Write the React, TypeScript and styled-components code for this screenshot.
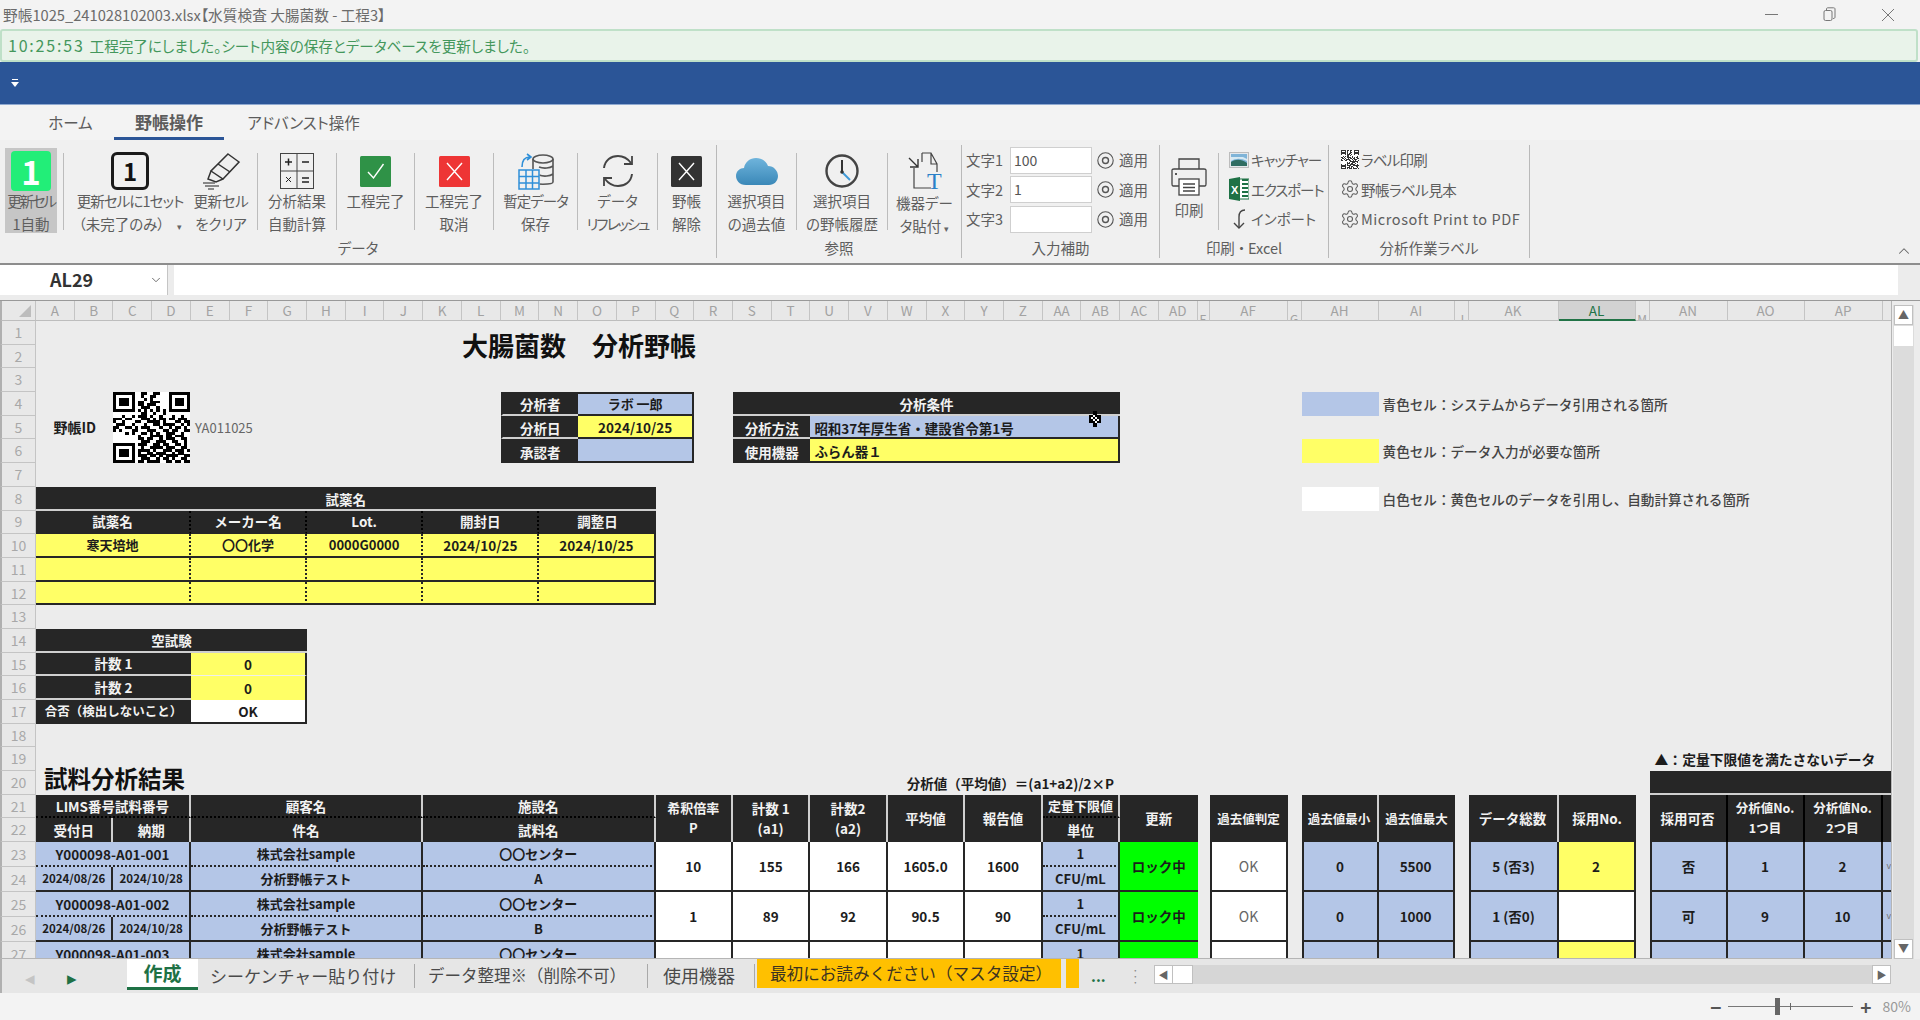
import React from 'react'
import styled, { createGlobalStyle } from 'styled-components'
import { ChevronDown, ChevronUp, Settings } from 'lucide-react'

const UI = `"Noto Sans CJK JP", "Noto Sans", sans-serif`

const Global = createGlobalStyle`
    html, body { margin: 0; padding: 0; background: #f3f3f3; }
    * { box-sizing: border-box; }
    body { font-family: ${UI}; overflow: hidden; line-height: 1.2; }
`

const Window = styled.div`
    width: 1920px;
    height: 1020px;
    display: flex;
    flex-direction: column;
    overflow: hidden;
    background: #f3f3f3;
`

const TitleBar = styled.div`
    height: 29px;
    flex: none;
    display: flex;
    align-items: center;
    padding-left: 3px;
    color: #6b6b6b;
    font-size: 14.7px;
    font-feature-settings: 'palt';
`

const WinButtons = styled.div`
    margin-left: auto;
    display: flex;
    align-items: center;
    gap: 45px;
    padding-right: 25px;
    color: #777;
`

const Message = styled.div`
    height: 33px;
    flex: none;
    margin-right: 2px;
    padding-left: 6px;
    display: flex;
    align-items: center;
    background: #e9f3ea;
    border: 2px solid #bfe0c8;
    border-radius: 3px;
    color: #44975c;
    font-size: 14.6px;
    font-feature-settings: 'palt';
`

const MessageTime = styled.span`
    font-size: 16px;
    letter-spacing: 1.8px;
    margin-right: 5px;
`

const Band = styled.div`
    height: 43px;
    flex: none;
    background: #2b5597;
    display: flex;
    align-items: center;
    padding-left: 11px;
    border-bottom: 1px solid #8fa9d0;
`

const TabRow = styled.div`
    height: 35px;
    flex: none;
    display: flex;
    color: #5c5c5c;
    font-size: 15.5px;
    font-feature-settings: 'palt';
`

const MenuTab = styled.div<{ $gap: number; $w: number; $active?: boolean }>`
    margin-left: ${p => p.$gap}px;
    width: ${p => p.$w}px;
    padding-top: 2px;
    display: flex;
    align-items: center;
    justify-content: center;
    white-space: nowrap;
    font-size: ${p => (p.$active ? 17 : 15.5)}px;
    font-weight: ${p => (p.$active ? 700 : 400)};
    border-bottom: 3px solid ${p => (p.$active ? '#2b5597' : 'transparent')};
`

const Ribbon = styled.div`
    height: 123px;
    flex: none;
    display: flex;
    padding-top: 5px;
    background: #f0f0f0;
    color: #5e5e5e;
    font-size: 14.5px;
    font-feature-settings: 'palt';
`

const Group = styled.div<{ $w: number }>`
    width: ${p => p.$w}px;
    flex: none;
    height: 113px;
    border-right: 1px solid #b9b9b9;
    display: flex;
    flex-direction: column;
`

const GroupBody = styled.div`
    height: 92px;
    display: flex;
    align-items: flex-start;
`

const GroupLabel = styled.div`
    flex: 1;
    display: flex;
    align-items: center;
    justify-content: center;
    font-size: 14.5px;
`

const Divider = styled.div<{ $ml?: number }>`
    width: 1px;
    height: 77px;
    margin: 8px 0 0 ${p => p.$ml ?? 0}px;
    flex: none;
    background: #bcbcbc;
`

const BigButton = styled.div<{ $w: number; $ml?: number; $active?: boolean; $top?: number }>`
    width: ${p => p.$w}px;
    height: 85px;
    margin-left: ${p => p.$ml ?? 0}px;
    margin-top: 3px;
    flex: none;
    display: flex;
    flex-direction: column;
    align-items: center;
    padding-top: ${p => p.$top ?? 5}px;
    background: ${p => (p.$active ? '#c6c6c6' : 'transparent')};
`

const IconBox = styled.div`
    height: 36px;
    flex: none;
    display: flex;
    align-items: center;
    justify-content: center;
`

const BtnText = styled.div<{ $ls?: number; $mt?: number }>`
    line-height: 23px;
    white-space: nowrap;
    text-align: center;
    letter-spacing: ${p => p.$ls ?? 0}px;
    margin-top: ${p => p.$mt ?? 0}px;
`

const Caret = styled.span<{ $ml?: number }>`
    font-size: 9px;
    margin-left: ${p => p.$ml ?? 12}px;
    color: #666;
`

const NumberTile = styled.div<{ $green?: boolean }>`
    width: ${p => (p.$green ? 40 : 38)}px;
    height: ${p => (p.$green ? 40 : 38)}px;
    border-radius: ${p => (p.$green ? 4 : 6)}px;
    background: ${p => (p.$green ? '#22ee78' : 'transparent')};
    border: ${p => (p.$green ? 'none' : '3px solid #1a1a1a')};
    color: ${p => (p.$green ? '#fff' : '#111')};
    display: flex;
    align-items: center;
    justify-content: center;
    font-size: ${p => (p.$green ? 33 : 24)}px;
    font-weight: 700;
    line-height: 1;
`

const InputGrid = styled.div`
    display: grid;
    grid-template-columns: 39px 82px 17px auto;
    grid-auto-rows: 28px;
    row-gap: 1.5px;
    column-gap: 5px;
    align-items: center;
    padding: 1px 0 0 4px;
`

const MiniInput = styled.div`
    height: 27px;
    background: #fff;
    border: 1px solid #cfcfcf;
    padding-left: 3px;
    display: flex;
    align-items: center;
    font-size: 14px;
    color: #555;
`

const LinkList = styled.div<{ $pl: number }>`
    display: flex;
    flex-direction: column;
    padding: 0 0 0 ${p => p.$pl}px;
`

const LinkRow = styled.div<{ $iw: number; $ls?: number }>`
    height: 29.5px;
    display: flex;
    align-items: center;
    white-space: nowrap;
    letter-spacing: ${p => p.$ls ?? 0}px;
    & > :first-child {
        width: ${p => p.$iw}px;
        flex: none;
        display: flex;
        justify-content: center;
    }
`

const Collapse = styled.div`
    margin-left: auto;
    align-self: flex-end;
    padding: 0 7px 3px 0;
    color: #666;
    display: flex;
`

const FormulaRow = styled.div`
    height: 37px;
    flex: none;
    display: flex;
    gap: 6px;
    padding-bottom: 5px;
    background: #ececec;
    border-top: 2px solid #8d8d8d;
`

const NameBox = styled.div`
    width: 168px;
    background: #fff;
    display: flex;
    align-items: center;
    justify-content: space-between;
    padding: 0 4px 0 50px;
    font-size: 18px;
    font-weight: 700;
    color: #333;
    border-right: 1px solid #c5c5c5;
`

const Formula = styled.div`
    flex: 1;
    margin-right: 22px;
    background: #fff;
`

const SheetArea = styled.div`
    height: 659px;
    flex: none;
    display: flex;
    border-top: 1px solid #999;
    background: #ececec;
`

const Sheet = styled.div`
    position: relative;
    width: 1892px;
    flex: none;
    overflow: hidden;
    display: grid;
    grid-template-columns: 36px repeat(30, 38.73px) 12px 78px 14px 77px 76px 14px 90px 77px 14px 78px 77px 78px 40px;
    grid-template-rows: 20px repeat(22, 23.7px) repeat(6, 25px);
    border-right: 1px solid #b5b5b5;
    border-bottom: 1px solid #b5b5b5;
`

const Corner = styled.div`
    grid-column: 1;
    grid-row: 1;
    background: #e8e8e8;
    border-right: 1px solid #c4c4c4;
    border-bottom: 1px solid #bdbdbd;
    border-left: 2px solid #b0b0b0;
    display: flex;
    align-items: flex-end;
    justify-content: flex-end;
    padding: 0 4px 3px 0;
    &::after {
        content: '';
        width: 12px;
        height: 12px;
        background: #bdbdbd;
        clip-path: polygon(100% 0, 100% 100%, 0 100%);
    }
`

const ColHead = styled.div<{ $i: number; $selected?: boolean; $narrow?: boolean }>`
    grid-column: ${p => p.$i + 1};
    grid-row: 1;
    background: ${p => (p.$selected ? '#d2d2d2' : '#e8e8e8')};
    color: ${p => (p.$selected ? '#217346' : '#a2a2a2')};
    border-right: 1px solid #c4c4c4;
    border-bottom: ${p => (p.$selected ? '2px solid #217346' : '1px solid #bdbdbd')};
    font-size: ${p => (p.$narrow ? 12 : 13.5)}px;
    display: flex;
    justify-content: center;
    align-items: center;
    overflow: hidden;
    padding-top: ${p => (p.$narrow ? 17 : 0)}px;
`

const RowHead = styled.div<{ $i: number }>`
    grid-column: 1;
    grid-row: ${p => p.$i + 1};
    background: #e8e8e8;
    color: #a8a8a8;
    border-right: 1px solid #c4c4c4;
    border-bottom: 1px solid #c4c4c4;
    border-left: 2px solid #b0b0b0;
    font-size: 14px;
    display: flex;
    align-items: center;
    justify-content: center;
`

type Tone = 'dark' | 'blue' | 'yellow' | 'white' | 'green' | 'plain'

const toneBg: Record<Tone, string> = {
    dark: '#262626',
    blue: '#b4c6e7',
    yellow: '#ffff66',
    white: '#ffffff',
    green: '#00ff00',
    plain: 'transparent',
}

type CellProps = {
    $c: number
    $r: number
    $cs?: number
    $rs?: number
    $tone?: Tone
    $left?: boolean
    $size?: number
    $weight?: number
    $color?: string
    $bt?: string
    $br?: string
    $bb?: string
    $bl?: string
    $pl?: number
    $ptop?: number
}

const Cell = styled.div<CellProps>`
    grid-column: ${p => p.$c + 1} / span ${p => p.$cs ?? 1};
    grid-row: ${p => p.$r + 1} / span ${p => p.$rs ?? 1};
    min-width: 0;
    display: flex;
    align-items: center;
    justify-content: ${p => (p.$left ? 'flex-start' : 'center')};
    padding-left: ${p => p.$pl ?? 0}px;
    padding-top: ${p => p.$ptop ?? 0}px;
    background: ${p => toneBg[p.$tone ?? 'plain']};
    color: ${p => p.$color ?? (p.$tone === 'dark' ? '#f2f2f2' : '#1c1c1c')};
    font-size: ${p => p.$size ?? (p.$tone === 'dark' ? 13.5 : 13)}px;
    font-weight: ${p => p.$weight ?? 700};
    white-space: nowrap;
    border-top: ${p => p.$bt ?? 'none'};
    border-right: ${p => p.$br ?? 'none'};
    border-bottom: ${p => p.$bb ?? 'none'};
    border-left: ${p => p.$bl ?? 'none'};
`

const Two = styled.span`
    display: block;
    text-align: center;
    line-height: 20px;
`

const PageTitle = styled(Cell)<{ $end?: boolean }>`
    color: #111;
    align-items: ${p => (p.$end ? 'flex-end' : 'center')};
    padding-bottom: ${p => (p.$end ? 3 : 0)}px;
`

const Cursor = styled.svg`
    position: absolute;
    left: 1088px;
    top: 110px;
`

const VScroll = styled.div`
    flex: 1;
    display: flex;
    flex-direction: column;
    padding: 4px 6px 0 1px;
`

const VTrack = styled.div`
    flex: 1;
    background: #dcdcdc;
    display: flex;
    flex-direction: column;
    justify-content: space-between;
    padding: 0 1px;
`

const VButton = styled.div`
    height: 20px;
    background: #fff;
    border: 1px solid #c0c0c0;
    color: #666;
    font-size: 11px;
    display: flex;
    align-items: center;
    justify-content: center;
`

const VThumb = styled.div`
    height: 20px;
    background: #fff;
    margin-top: 1px;
`

const TabBar = styled.div`
    height: 34px;
    flex: none;
    display: flex;
    align-items: center;
    background: #e6e6e6;
    color: #4a4a4a;
`

const SheetNav = styled.div`
    width: 127px;
    flex: none;
    display: flex;
    align-self: stretch;
    align-items: center;
    padding-left: 23px;
    gap: 32px;
    border-left: 2px solid #b0b0b0;
`

const NavArrow = styled.span<{ $on?: boolean }>`
    font-size: 19px;
    line-height: 1;
    color: ${p => (p.$on ? '#1e7145' : '#c4c4c4')};
`

const ActiveTab = styled.div`
    width: 71px;
    height: 31px;
    margin-bottom: 3px;
    background: #fff;
    border-bottom: 3px solid #1e7145;
    color: #1e7145;
    font-size: 19px;
    font-weight: 700;
    display: flex;
    align-items: center;
    justify-content: center;
    flex: none;
`

const SheetTab = styled.div<{ $w: number; $pl: number; $size: number }>`
    width: ${p => p.$w}px;
    flex: none;
    padding-left: ${p => p.$pl}px;
    height: 24px;
    display: flex;
    align-items: center;
    white-space: nowrap;
    font-size: ${p => p.$size}px;
    border-right: 1px solid #a9a9a9;
`

const OrangeTab = styled.div<{ $w: number; $ml: number }>`
    width: ${p => p.$w}px;
    margin-left: ${p => p.$ml}px;
    margin-bottom: 5px;
    height: 29px;
    flex: none;
    background: #ffc000;
    color: #3c3320;
    font-size: 16.6px;
    white-space: nowrap;
    display: flex;
    align-items: center;
    padding-left: 13px;
`

const MoreTabs = styled.div`
    width: 44px;
    margin-left: 9px;
    flex: none;
    color: #1e7145;
    font-size: 15px;
    font-weight: 700;
    padding-left: 3px;
`

const GripDots = styled.div`
    width: 22px;
    flex: none;
    color: #888;
    font-size: 12px;
    line-height: 6px;
    display: flex;
    flex-direction: column;
    align-items: flex-start;
`

const HTrack = styled.div`
    width: 737px;
    height: 19px;
    flex: none;
    margin-bottom: 3px;
    display: flex;
    background: #d6d6d6;
`

const HButton = styled.div`
    width: 19px;
    background: #fff;
    border: 1px solid #c0c0c0;
    color: #666;
    font-size: 10px;
    display: flex;
    align-items: center;
    justify-content: center;
`

const HThumb = styled.div`
    width: 20px;
    background: #fff;
    border: 1px solid #c0c0c0;
    border-left: none;
`

const HSpace = styled.div`
    flex: 1;
`

const StatusBar = styled.div`
    height: 27px;
    flex: none;
    display: flex;
    align-items: center;
    justify-content: flex-end;
    padding-right: 9px;
    background: #f3f3f3;
    color: #555;
`

const ZoomSign = styled.span`
    font-size: 19px;
    font-weight: 700;
    line-height: 1;
    color: #555;
`

const ZoomTrack = styled.div`
    width: 125px;
    height: 1px;
    margin: 0 7px;
    background: #777;
    position: relative;
`

const ZoomThumb = styled.div`
    position: absolute;
    left: 47px;
    top: -8px;
    width: 5px;
    height: 17px;
    background: #666;
`

const ZoomTick = styled.div`
    position: absolute;
    left: 62px;
    top: -3px;
    width: 1px;
    height: 7px;
    background: #666;
`

const ZoomValue = styled.span`
    margin-left: 11px;
    font-size: 14px;
    color: #999;
`

const K = '2px solid #262626'
const L = '2px solid #cfcfcf'
const D = '2px dotted #262626'
const DK = '2px dotted #000'

const qrRows = [
    '1111111001100110001111111',
    '1000001001001100001000001',
    '1011101000101000001011101',
    '1011101011001110001011101',
    '1011101011011100001011101',
    '1000001001110010001000001',
    '1111111010101010101111111',
    '0000000001100100100000000',
    '0001001011101001000100100',
    '1110110001110101101101110',
    '1001000110011110100011011',
    '0111001000100110111100101',
    '1100110101110001001011010',
    '1010001100011100110110011',
    '0000101001101010011100100',
    '0000000010001111011011100',
    '0000000011011001011100110',
    '0000000001110011100110010',
    '1111111011100110110011010',
    '1000001001001111011100110',
    '1011101011110100111011101',
    '1011101010011011100101100',
    '1011101011101101011110011',
    '1000001001110010110100110',
    '1111111011011110011011011',
]

const QrCode = ({ width, height, color = '#000' }: { width: number; height: number; color?: string }) => (
    <svg width={width} height={height} viewBox="0 0 25 25" preserveAspectRatio="none" shapeRendering="crispEdges">
        <rect width="25" height="25" fill="#fff" />
        {qrRows.map((row, y) =>
            row.split('').map((bit, x) => (bit === '1' ? <rect key={`${x}-${y}`} x={x} y={y} width="1.02" height="1.02" fill={color} /> : null))
        )}
    </svg>
)

const EraserIcon = () => (
    <svg width="40" height="38" viewBox="0 0 40 38" fill="none" stroke="#333" strokeWidth="1.5">
        <path d="M27 2 L38 10 L22 27 L10 19 Z" />
        <path d="M17 12 L29 20" />
        <path d="M10 19 L7 27 L15 30 L22 27" />
        <path d="M2 31 H14 M4 34 H18 M7 37 H13" stroke="#666" />
    </svg>
)

const CalcIcon = () => (
    <svg width="34" height="36" viewBox="0 0 34 36" fill="none" stroke="#444">
        <rect x="0.5" y="0.5" width="33" height="35" />
        <path d="M17 0 V36 M0 18 H34" />
        <path d="M5 9 H12 M8.5 5.5 V12.5 M22 9 H29" stroke="#222" strokeWidth="1.5" />
        <path d="M6 24 L11 29 M11 24 L6 29" stroke="#222" />
        <path d="M22 25 H29 M22 29 H29" stroke="#222" strokeWidth="1.5" />
    </svg>
)

const StatusIcon = ({ color, check }: { color: string; check?: boolean }) => (
    <svg width="31" height="31" viewBox="0 0 31 31" fill="none">
        <rect width="31" height="31" rx="1.5" fill={color} />
        {check ? (
            <path d="M8 16 L13.5 22 L23.5 8" stroke="#fff" strokeWidth="1.4" />
        ) : (
            <path d="M8 7 L23 24 M23 7 L8 24" stroke="#fff" strokeWidth="1.4" />
        )}
    </svg>
)

const SaveDataIcon = () => (
    <svg width="36" height="38" viewBox="0 0 36 38" fill="none">
        <ellipse cx="25" cy="7" rx="10" ry="4" stroke="#555" strokeWidth="1.6" />
        <path d="M15 7 V30 C15 33 35 33 35 30 V7 M21 15 C26 17 32 16 35 14 M21 23 C26 25 32 24 35 22" stroke="#555" strokeWidth="1.6" />
        <rect x="0.5" y="17" width="21" height="20" fill="#f0f0f0" />
        <path d="M1 18 H21 V37 H1 Z M8 18 V37 M14.5 18 V37 M1 24.5 H21 M1 31 H21" stroke="#2f8fd8" strokeWidth="1.5" />
        <path d="M4 15 C4 8 7 5 12 5 M9 2 L13 5 L9 8" stroke="#2f8fd8" strokeWidth="1.6" />
    </svg>
)

const RefreshIcon = () => (
    <svg width="34" height="36" viewBox="0 0 34 36" fill="none" stroke="#444" strokeWidth="2">
        <path d="M3 15 C4 7 10 3 17 3 C23 3 27 6 30 10" />
        <path d="M31 3 V11 H23" strokeWidth="1.8" />
        <path d="M31 21 C30 29 24 33 17 33 C11 33 7 30 4 26" />
        <path d="M3 33 V25 H11" strokeWidth="1.8" />
    </svg>
)

const CloudIcon = () => (
    <svg width="42" height="28" viewBox="0 0 42 28">
        <defs>
            <linearGradient id="cloudFill" x1="0" y1="0" x2="0" y2="1">
                <stop offset="0" stopColor="#6fb4dc" />
                <stop offset="1" stopColor="#3a88b8" />
            </linearGradient>
        </defs>
        <path d="M10 28 C3 28 0 23 0 19 C0 14 4 11 8 11 C9 5 14 1 20 1 C26 1 30 4 32 9 C38 9 42 14 42 19 C42 24 38 28 33 28 Z" fill="url(#cloudFill)" />
    </svg>
)

const ClockIcon = () => (
    <svg width="34" height="34" viewBox="0 0 34 34" fill="none">
        <circle cx="17" cy="17" r="15.5" stroke="#444" strokeWidth="2.4" />
        <path d="M17 6 V18" stroke="#333" strokeWidth="2" />
        <path d="M17 18 L25 26" stroke="#3f9ad8" strokeWidth="2" />
        <circle cx="17" cy="18" r="1.8" fill="#333" />
    </svg>
)

const PasteIcon = () => (
    <svg width="36" height="38" viewBox="0 0 36 38" fill="none">
        <path d="M15 1 H24 L30 12 V20 M24 1 V12 H30 M7 16 V36 H24" stroke="#444" strokeWidth="1.2" />
        <path d="M2 6 L11 15 M11 7 V15 H3" stroke="#333" strokeWidth="1.4" />
        <path d="M15 1 V10" stroke="#444" strokeWidth="1.2" />
        <text x="20" y="37" fontFamily="Liberation Serif, serif" fontSize="24" fill="#2a80c8">T</text>
    </svg>
)

const RadioIcon = () => (
    <svg width="17" height="17" viewBox="0 0 17 17" fill="none" stroke="#555">
        <circle cx="8.5" cy="8.5" r="7.7" strokeWidth="1.1" />
        <circle cx="8.5" cy="8.5" r="3" strokeWidth="1.4" />
    </svg>
)

const PrinterIcon = () => (
    <svg width="36" height="38" viewBox="0 0 36 38" fill="none" stroke="#444" strokeWidth="1.3">
        <path d="M8 11 V1 H28 V11" />
        <path d="M8 28 H2 C1 28 1 27 1 26 V12 C1 11 2 11 3 11 H33 C34 11 35 11 35 12 V26 C35 27 35 28 34 28 H28" />
        <rect x="8" y="21" width="20" height="16" fill="#fff" />
        <path d="M12 26 H24 M12 29.5 H24 M12 33 H24" />
        <circle cx="5" cy="16" r="1" fill="#222" stroke="none" />
    </svg>
)

const PictureIcon = () => (
    <svg width="20" height="16" viewBox="0 0 20 16">
        <rect x="0.5" y="0.5" width="19" height="15" fill="#e4e8ec" stroke="#bcbcbc" />
        <rect x="2" y="2" width="16" height="12" fill="#7fb4d8" />
        <path d="M2 10 C7 7 12 7 18 11 V14 H2 Z" fill="#2f6d62" />
        <path d="M2 5 H14 L18 7 V9 C12 6 7 6 2 9 Z" fill="#d7e9f2" />
    </svg>
)

const ExcelIcon = () => (
    <svg width="20" height="24" viewBox="0 0 20 24">
        <rect x="8" y="2" width="12" height="20" fill="#fff" stroke="#1e7145" />
        <path d="M13 3 H19 M13 7 H19 M13 11 H19 M13 15 H19 M13 19 H19" stroke="#1e7145" strokeWidth="2" />
        <path d="M0 2 L11 0 V24 L0 22 Z" fill="#1e7145" />
        <text x="2" y="16.5" fontFamily="Liberation Sans, sans-serif" fontWeight="700" fontSize="11" fill="#fff">X</text>
    </svg>
)

const ImportIcon = () => (
    <svg width="16" height="22" viewBox="0 0 16 22" fill="none" stroke="#444" strokeWidth="1.4">
        <path d="M14 2 C9 2 8 5 8 9 V20" />
        <path d="M3 15 L8 20 L13 15" />
    </svg>
)

const sheetColumns: string[] = 'ABCDEFGHIJKLMNOPQRSTUVWXYZ'.split('').concat(['AA', 'AB', 'AC', 'AD', 'E', 'AF', 'G', 'AH', 'AI', 'J', 'AK', 'AL', 'M', 'AN', 'AO', 'AP', 'AQ'])
const narrowIdx = [31, 33, 36, 39]

type ResultRow = {
    no: string
    recv: string
    due: string
    sample: string
    p: string
    a1: string
    a2: string
    avg: string
    rep: string
    past: string
    min: string
    max: string
    total: string
    adopt: string
    adoptTone: Tone
    judge: string
    n1: string
    n2: string
}

const results: ResultRow[] = [
    { no: 'Y000098-A01-001', recv: '2024/08/26', due: '2024/10/28', sample: 'A', p: '10', a1: '155', a2: '166', avg: '1605.0', rep: '1600', past: 'OK', min: '0', max: '5500', total: '5 (否3)', adopt: '2', adoptTone: 'yellow', judge: '否', n1: '1', n2: '2' },
    { no: 'Y000098-A01-002', recv: '2024/08/26', due: '2024/10/28', sample: 'B', p: '1', a1: '89', a2: '92', avg: '90.5', rep: '90', past: 'OK', min: '0', max: '1000', total: '1 (否0)', adopt: '', adoptTone: 'white', judge: '可', n1: '9', n2: '10' },
    { no: 'Y000098-A01-003', recv: '', due: '', sample: '', p: '', a1: '', a2: '', avg: '', rep: '', past: '', min: '', max: '', total: '', adopt: '', adoptTone: 'yellow', judge: '', n1: '', n2: '' },
]

// 数値列の見出し（開始列, 列数, 見出し）
const headNumbers: [number, number, React.ReactNode, number?][] = [
    [17, 2, <Two>希釈倍率<br />P</Two>, 13],
    [19, 2, <Two>計数 1<br />(a1)</Two>],
    [21, 2, <Two>計数2<br />(a2)</Two>],
    [23, 2, '平均値'],
    [25, 2, '報告値'],
]

const ResultBlock = ({ row, r }: { row: ResultRow; r: number }) => {
    const whiteCell = { $tone: 'white' as Tone, $rs: 2, $br: K, $bb: K, $size: 13.5 }
    const blueCell = { $tone: 'blue' as Tone, $rs: 2, $br: K, $bb: K, $size: 13.5 }
    return (
        <>
            <Cell $c={1} $cs={4} $r={r} $tone="blue" $bb={D} $br={K} $size={13.5}>{row.no}</Cell>
            <Cell $c={1} $cs={2} $r={r + 1} $tone="blue" $br={K} $bb={K} $size={11.5}>{row.recv}</Cell>
            <Cell $c={3} $cs={2} $r={r + 1} $tone="blue" $br={K} $bb={K} $size={11.5}>{row.due}</Cell>
            <Cell $c={5} $cs={6} $r={r} $tone="blue" $bb={D} $br={K}>株式会社sample</Cell>
            <Cell $c={5} $cs={6} $r={r + 1} $tone="blue" $bb={K} $br={K}>{row.recv ? '分析野帳テスト' : ''}</Cell>
            <Cell $c={11} $cs={6} $r={r} $tone="blue" $bb={D} $br={K}>〇〇センター</Cell>
            <Cell $c={11} $cs={6} $r={r + 1} $tone="blue" $bb={K} $br={K}>{row.sample}</Cell>
            <Cell $c={17} $cs={2} $r={r} {...whiteCell}>{row.p}</Cell>
            <Cell $c={19} $cs={2} $r={r} {...whiteCell}>{row.a1}</Cell>
            <Cell $c={21} $cs={2} $r={r} {...whiteCell}>{row.a2}</Cell>
            <Cell $c={23} $cs={2} $r={r} {...whiteCell}>{row.avg}</Cell>
            <Cell $c={25} $cs={2} $r={r} {...whiteCell}>{row.rep}</Cell>
            <Cell $c={27} $cs={2} $r={r} $tone="blue" $bb={D} $br={K}>1</Cell>
            <Cell $c={27} $cs={2} $r={r + 1} $tone="blue" $bb={K} $br={K}>CFU/mL</Cell>
            <Cell $c={29} $cs={2} $r={r} $rs={2} $tone="green" $bb={K} $size={13.5}>{row.recv ? 'ロック中' : ''}</Cell>
            <Cell $c={32} $r={r} {...whiteCell} $bl={K} $weight={400} $color="#666" $size={14}>{row.past}</Cell>
            <Cell $c={34} $r={r} {...blueCell} $bl={K}>{row.min}</Cell>
            <Cell $c={35} $r={r} {...blueCell}>{row.max}</Cell>
            <Cell $c={37} $r={r} {...blueCell} $bl={K}>{row.total}</Cell>
            <Cell $c={38} $r={r} {...whiteCell} $tone={row.adoptTone}>{row.adopt}</Cell>
            <Cell $c={40} $r={r} {...blueCell} $bl={K}>{row.judge}</Cell>
            <Cell $c={41} $r={r} {...blueCell}>{row.n1}</Cell>
            <Cell $c={42} $r={r} {...blueCell}>{row.n2}</Cell>
            <Cell $c={43} $r={r} $rs={2} $tone="blue" $bb={K} $left $pl={4} $size={9} $weight={400} $color="#777">{row.recv ? 'v' : ''}</Cell>
        </>
    )
}

const App = () => {
    return (
        <Window>
            <Global />
            <TitleBar>
                野帳1025_241028102003.xlsx【水質検査 大腸菌数 - 工程3】
                <WinButtons>
                    <svg width="13" height="13" viewBox="0 0 13 13" stroke="currentColor"><path d="M0 6.5 H13" /></svg>
                    <svg width="13" height="15" viewBox="0 0 13 15" fill="none" stroke="currentColor"><rect x="1" y="3.5" width="8" height="10" rx="1.5" /><path d="M3.5 3.5 V2 C3.5 1 4 0.8 5 0.8 H10.5 C11.5 0.8 12 1.2 12 2 V10 C12 11 11.5 11.5 10 11.5" /></svg>
                    <svg width="14" height="14" viewBox="0 0 14 14" stroke="currentColor"><path d="M1 1 L13 13 M13 1 L1 13" /></svg>
                </WinButtons>
            </TitleBar>
            <Message><MessageTime>10:25:53</MessageTime>工程完了にしました。シート内容の保存とデータベースを更新しました。</Message>
            <Band>
                <svg width="8" height="9" viewBox="0 0 8 9" fill="#fff"><rect width="6" height="1" x="1" y="0" /><path d="M0 3 H8 L4 8 Z" /></svg>
            </Band>
            <TabRow>
                <MenuTab $gap={50} $w={41}>ホーム</MenuTab>
                <MenuTab $gap={23} $w={110} $active>野帳操作</MenuTab>
                <MenuTab $gap={22} $w={115}>アドバンスト操作</MenuTab>
            </TabRow>
            <Ribbon>
                <Group $w={717}>
                    <GroupBody>
                        <BigButton $w={52} $ml={5} $active>
                            <IconBox><NumberTile $green>1</NumberTile></IconBox>
                            <BtnText $ls={-2.2}>更新セル</BtnText>
                            <BtnText>1自動</BtnText>
                        </BigButton>
                        <Divider $ml={6} />
                        <BigButton $w={132}>
                            <IconBox><NumberTile>1</NumberTile></IconBox>
                            <BtnText $ls={-0.9}>更新セルに1セット</BtnText>
                            <BtnText>（未完了のみ）<Caret>▾</Caret></BtnText>
                        </BigButton>
                        <BigButton $w={50}>
                            <IconBox><EraserIcon /></IconBox>
                            <BtnText $ls={-0.3}>更新セル</BtnText>
                            <BtnText>をクリア</BtnText>
                        </BigButton>
                        <Divider $ml={11} />
                        <BigButton $w={78}>
                            <IconBox><CalcIcon /></IconBox>
                            <BtnText>分析結果</BtnText>
                            <BtnText>自動計算</BtnText>
                        </BigButton>
                        <Divider />
                        <BigButton $w={77}>
                            <IconBox><StatusIcon color="#2f9247" check /></IconBox>
                            <BtnText>工程完了</BtnText>
                        </BigButton>
                        <Divider />
                        <BigButton $w={78}>
                            <IconBox><StatusIcon color="#ee3535" /></IconBox>
                            <BtnText>工程完了</BtnText>
                            <BtnText>取消</BtnText>
                        </BigButton>
                        <Divider />
                        <BigButton $w={83}>
                            <IconBox><SaveDataIcon /></IconBox>
                            <BtnText $ls={-1}>暫定データ</BtnText>
                            <BtnText>保存</BtnText>
                        </BigButton>
                        <Divider />
                        <BigButton $w={79}>
                            <IconBox><RefreshIcon /></IconBox>
                            <BtnText>データ</BtnText>
                            <BtnText $ls={-2}>リフレッシュ</BtnText>
                        </BigButton>
                        <Divider />
                        <BigButton $w={57}>
                            <IconBox><StatusIcon color="#333333" /></IconBox>
                            <BtnText>野帳</BtnText>
                            <BtnText>解除</BtnText>
                        </BigButton>
                    </GroupBody>
                    <GroupLabel>データ</GroupLabel>
                </Group>
                <Group $w={245}>
                    <GroupBody>
                        <BigButton $w={79}>
                            <IconBox><CloudIcon /></IconBox>
                            <BtnText>選択項目</BtnText>
                            <BtnText>の過去値</BtnText>
                        </BigButton>
                        <Divider />
                        <BigButton $w={90}>
                            <IconBox><ClockIcon /></IconBox>
                            <BtnText>選択項目</BtnText>
                            <BtnText>の野帳履歴</BtnText>
                        </BigButton>
                        <Divider />
                        <BigButton $w={73}>
                            <IconBox><PasteIcon /></IconBox>
                            <BtnText $mt={2}>機器デー</BtnText>
                            <BtnText>タ貼付<Caret $ml={3}>▾</Caret></BtnText>
                        </BigButton>
                    </GroupBody>
                    <GroupLabel>参照</GroupLabel>
                </Group>
                <Group $w={198}>
                    <GroupBody>
                        <InputGrid>
                            <span>文字1</span>
                            <MiniInput>100</MiniInput>
                            <RadioIcon />
                            <span>適用</span>
                            <span>文字2</span>
                            <MiniInput>1</MiniInput>
                            <RadioIcon />
                            <span>適用</span>
                            <span>文字3</span>
                            <MiniInput />
                            <RadioIcon />
                            <span>適用</span>
                        </InputGrid>
                    </GroupBody>
                    <GroupLabel>入力補助</GroupLabel>
                </Group>
                <Group $w={169}>
                    <GroupBody>
                        <BigButton $w={58} $top={11}>
                            <IconBox><PrinterIcon /></IconBox>
                            <BtnText $mt={3}>印刷</BtnText>
                        </BigButton>
                        <Divider />
                        <LinkList $pl={8}>
                            <LinkRow $iw={24} $ls={-1}><span><PictureIcon /></span>キャッチャー</LinkRow>
                            <LinkRow $iw={24} $ls={-1.1}><span><ExcelIcon /></span>エクスポート</LinkRow>
                            <LinkRow $iw={24}><span><ImportIcon /></span>インポート</LinkRow>
                        </LinkList>
                    </GroupBody>
                    <GroupLabel>印刷&#8201;・&#8201;Excel</GroupLabel>
                </Group>
                <Group $w={201}>
                    <GroupBody>
                        <LinkList $pl={9}>
                            <LinkRow $iw={23} $ls={-0.8}><span><QrCode width={18} height={19} color="#333" /></span>ラベル印刷</LinkRow>
                            <LinkRow $iw={23} $ls={-0.5}><span><Settings size={20} strokeWidth={1.3} /></span>野帳ラベル見本</LinkRow>
                            <LinkRow $iw={23} $ls={0.55}><span><Settings size={20} strokeWidth={1.3} /></span>Microsoft Print to PDF</LinkRow>
                        </LinkList>
                    </GroupBody>
                    <GroupLabel>分析作業ラベル</GroupLabel>
                </Group>
                <Collapse><ChevronUp size={18} strokeWidth={1.4} /></Collapse>
            </Ribbon>
            <FormulaRow>
                <NameBox>AL29<ChevronDown size={14} strokeWidth={1.6} color="#666" /></NameBox>
                <Formula />
            </FormulaRow>
            <SheetArea>
                <Sheet>
                    <Corner />
                    {sheetColumns.map((name, i) => (
                        <ColHead key={i} $i={i + 1} $selected={name === 'AL'} $narrow={narrowIdx.includes(i + 1)}>{name === 'AQ' ? '' : name}</ColHead>
                    ))}
                    {Array.from({ length: 27 }, (_, i) => (
                        <RowHead key={i} $i={i + 1}>{i + 1}</RowHead>
                    ))}

                    <PageTitle $c={12} $cs={8} $r={1} $rs={2} $left $size={26}>大腸菌数　分析野帳</PageTitle>

                    <Cell $c={1} $cs={2} $r={5} $size={14}>野帳ID</Cell>
                    <Cell $c={3} $cs={2} $r={4} $rs={3}><QrCode width={78} height={71} /></Cell>
                    <Cell $c={5} $cs={2} $r={5} $left $pl={4} $size={13} $weight={400} $color="#666">YA011025</Cell>

                    <Cell $c={13} $cs={2} $r={4} $tone="dark" $bb={L} $bl={K} $ptop={3}>分析者</Cell>
                    <Cell $c={15} $cs={3} $r={4} $tone="blue" $bb={K} $br={K} $bt={K}>ラボ 一郎</Cell>
                    <Cell $c={13} $cs={2} $r={5} $tone="dark" $bb={L} $bl={K} $ptop={3}>分析日</Cell>
                    <Cell $c={15} $cs={3} $r={5} $tone="yellow" $bb={K} $br={K} $size={13.5}>2024/10/25</Cell>
                    <Cell $c={13} $cs={2} $r={6} $tone="dark" $bb={K} $bl={K} $ptop={3}>承認者</Cell>
                    <Cell $c={15} $cs={3} $r={6} $tone="blue" $bb={K} $br={K} />

                    <Cell $c={19} $cs={10} $r={4} $tone="dark" $bb={L} $ptop={3}>分析条件</Cell>
                    <Cell $c={19} $cs={2} $r={5} $tone="dark" $bb={L} $ptop={3}>分析方法</Cell>
                    <Cell $c={21} $cs={8} $r={5} $tone="blue" $bb={K} $br={K} $left $pl={4} $ptop={2} $size={13.5}>昭和37年厚生省・建設省令第1号</Cell>
                    <Cell $c={19} $cs={2} $r={6} $tone="dark" $bb={K} $ptop={3}>使用機器</Cell>
                    <Cell $c={21} $cs={8} $r={6} $tone="yellow" $bb={K} $br={K} $left $pl={4} $ptop={2} $size={13.5}>ふらん器１</Cell>

                    <Cell $c={34} $r={4} $tone="blue" />
                    <Cell $c={35} $cs={8} $r={4} $left $pl={4} $size={13.6} $weight={500} $color="#444">青色セル：システムからデータ引用される箇所</Cell>
                    <Cell $c={34} $r={6} $tone="yellow" />
                    <Cell $c={35} $cs={8} $r={6} $left $pl={4} $size={13.6} $weight={500} $color="#444">黄色セル：データ入力が必要な箇所</Cell>
                    <Cell $c={34} $r={8} $tone="white" />
                    <Cell $c={35} $cs={8} $r={8} $left $pl={4} $size={13.6} $weight={500} $color="#444">白色セル：黄色セルのデータを引用し、自動計算される箇所</Cell>

                    <Cell $c={1} $cs={16} $r={8} $tone="dark" $bb={L} $ptop={3}>試薬名</Cell>
                    <Cell $c={1} $cs={4} $r={9} $tone="dark" $br={DK} $bb={K}>試薬名</Cell>
                    <Cell $c={5} $cs={3} $r={9} $tone="dark" $br={DK} $bb={K}>メーカー名</Cell>
                    <Cell $c={8} $cs={3} $r={9} $tone="dark" $br={DK} $bb={K}>Lot.</Cell>
                    <Cell $c={11} $cs={3} $r={9} $tone="dark" $br={DK} $bb={K}>開封日</Cell>
                    <Cell $c={14} $cs={3} $r={9} $tone="dark" $bb={K}>調整日</Cell>
                    {[
                        ['寒天培地', '〇〇化学', '0000G0000', '2024/10/25', '2024/10/25'],
                        ['', '', '', '', ''],
                        ['', '', '', '', ''],
                    ].map((vals, n) => (
                        <React.Fragment key={n}>
                            <Cell $c={1} $cs={4} $r={10 + n} $tone="yellow" $br={D} $bb={K}>{vals[0]}</Cell>
                            <Cell $c={5} $cs={3} $r={10 + n} $tone="yellow" $br={D} $bb={K}>{vals[1]}</Cell>
                            <Cell $c={8} $cs={3} $r={10 + n} $tone="yellow" $br={D} $bb={K}>{vals[2]}</Cell>
                            <Cell $c={11} $cs={3} $r={10 + n} $tone="yellow" $br={D} $bb={K} $size={13.5}>{vals[3]}</Cell>
                            <Cell $c={14} $cs={3} $r={10 + n} $tone="yellow" $br={K} $bb={K} $size={13.5}>{vals[4]}</Cell>
                        </React.Fragment>
                    ))}

                    <Cell $c={1} $cs={7} $r={14} $tone="dark" $bb={L}>空試験</Cell>
                    <Cell $c={1} $cs={4} $r={15} $tone="dark" $bb={L}>計数 1</Cell>
                    <Cell $c={5} $cs={3} $r={15} $tone="yellow" $bb="1px solid #eee" $br={K} $size={13.5}>0</Cell>
                    <Cell $c={1} $cs={4} $r={16} $tone="dark" $bb={L}>計数 2</Cell>
                    <Cell $c={5} $cs={3} $r={16} $tone="yellow" $br={K} $size={13.5}>0</Cell>
                    <Cell $c={1} $cs={4} $r={17} $tone="dark" $bb={K} $size={12.5}>合否（検出しないこと）</Cell>
                    <Cell $c={5} $cs={3} $r={17} $tone="white" $bb={K} $br={K} $size={13.5}>OK</Cell>

                    <PageTitle $c={1} $cs={8} $r={19} $rs={2} $left $end $pl={8} $size={23.5}>試料分析結果</PageTitle>
                    <Cell $c={23} $cs={8} $r={20} $size={13.5} $left $pl={19}>分析値（平均値）＝(a1+a2)/2×P</Cell>
                    <Cell $c={40} $cs={4} $r={19} $left $pl={5} $size={13.8}>▲：定量下限値を満たさないデータ</Cell>
                    <Cell $c={40} $cs={4} $r={20} $tone="dark" $bb={L} />

                    <Cell $c={1} $cs={4} $r={21} $tone="dark" $bb={DK} $br={L}>LIMS番号試料番号</Cell>
                    <Cell $c={1} $cs={2} $r={22} $tone="dark" $br={L}>受付日</Cell>
                    <Cell $c={3} $cs={2} $r={22} $tone="dark" $br={L}>納期</Cell>
                    <Cell $c={5} $cs={6} $r={21} $tone="dark" $bb={DK} $br={L}>顧客名</Cell>
                    <Cell $c={5} $cs={6} $r={22} $tone="dark" $br={L}>件名</Cell>
                    <Cell $c={11} $cs={6} $r={21} $tone="dark" $bb={DK} $br={L}>施設名</Cell>
                    <Cell $c={11} $cs={6} $r={22} $tone="dark" $br={L}>試料名</Cell>
                    {headNumbers.map(([c, cs, label, size], n) => (
                        <Cell key={n} $c={c} $cs={cs} $r={21} $rs={2} $tone="dark" $br={L} $size={size}>{label}</Cell>
                    ))}
                    <Cell $c={27} $cs={2} $r={21} $tone="dark" $bb={DK} $br={L} $size={13}>定量下限値</Cell>
                    <Cell $c={27} $cs={2} $r={22} $tone="dark" $br={L}>単位</Cell>
                    <Cell $c={29} $cs={2} $r={21} $rs={2} $tone="dark">更新</Cell>
                    <Cell $c={32} $r={21} $rs={2} $tone="dark" $size={12.5}>過去値判定</Cell>
                    <Cell $c={34} $r={21} $rs={2} $tone="dark" $br={L} $size={12.5}>過去値最小</Cell>
                    <Cell $c={35} $r={21} $rs={2} $tone="dark" $size={12.5}>過去値最大</Cell>
                    <Cell $c={37} $r={21} $rs={2} $tone="dark" $br={L}>データ総数</Cell>
                    <Cell $c={38} $r={21} $rs={2} $tone="dark">採用No.</Cell>
                    <Cell $c={40} $r={21} $rs={2} $tone="dark" $br="2px solid #000">採用可否</Cell>
                    <Cell $c={41} $r={21} $rs={2} $tone="dark" $br="2px solid #000" $size={12.5}><Two>分析値No.<br />1つ目</Two></Cell>
                    <Cell $c={42} $r={21} $rs={2} $tone="dark" $br="2px solid #000" $size={12.5}><Two>分析値No.<br />2つ目</Two></Cell>
                    <Cell $c={43} $r={21} $rs={2} $tone="dark" />

                    {results.map((row, n) => (
                        <ResultBlock key={row.no} row={row} r={23 + n * 2} />
                    ))}

                    <Cursor width="14" height="16" viewBox="0 0 14 16">
                        <path d="M5 0 H9 V4 H13 V12 H9 V16 H5 V12 H1 V4 H5 Z" fill="#000" />
                        <path d="M5 4 H7 V6 H5 Z M7 6 H9 V8 H7 Z M5 8 H7 V10 H5 Z M7 10 H9 V12 H7 Z M3 6 H5 V8 H3 Z M9 8 H11 V10 H9 Z" fill="#fff" />
                    </Cursor>
                </Sheet>
                <VScroll>
                    <VTrack>
                        <div>
                            <VButton>▲</VButton>
                            <VThumb />
                        </div>
                        <VButton>▼</VButton>
                    </VTrack>
                </VScroll>
            </SheetArea>
            <TabBar>
                <SheetNav>
                    <NavArrow>◂</NavArrow>
                    <NavArrow $on>▸</NavArrow>
                </SheetNav>
                <ActiveTab>作成</ActiveTab>
                <SheetTab $w={217} $pl={12} $size={17}>シーケンチャー貼り付け</SheetTab>
                <SheetTab $w={233} $pl={13} $size={16.5}>データ整理※（削除不可）</SheetTab>
                <SheetTab $w={107} $pl={15} $size={18}>使用機器</SheetTab>
                <OrangeTab $w={304} $ml={2}>最初にお読みください（マスタ設定）</OrangeTab>
                <OrangeTab $w={11} $ml={5} />
                <MoreTabs>...</MoreTabs>
                <GripDots><span>·</span><span>·</span><span>·</span></GripDots>
                <HTrack>
                    <HButton>◀</HButton>
                    <HThumb />
                    <HSpace />
                    <HButton>▶</HButton>
                </HTrack>
            </TabBar>
            <StatusBar>
                <ZoomSign>−</ZoomSign>
                <ZoomTrack>
                    <ZoomThumb />
                    <ZoomTick />
                </ZoomTrack>
                <ZoomSign>+</ZoomSign>
                <ZoomValue>80%</ZoomValue>
            </StatusBar>
        </Window>
    )
}

export default App
